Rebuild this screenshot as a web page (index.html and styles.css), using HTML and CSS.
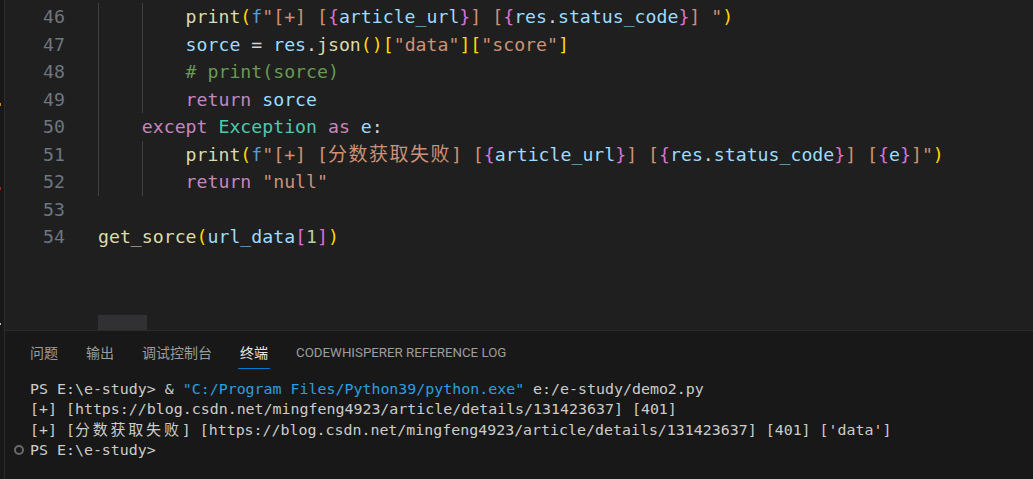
FILE: index.html
```html
<!DOCTYPE html>
<html lang="zh-CN">
<head>
    <meta charset="UTF-8">
    <meta name="viewport" content="width=device-width, initial-scale=1.0">
    <title>demo2.py</title>
    <link rel="stylesheet" href="styles.css">
</head>
<body>
    <div class="window">
        <div class="rail">
            <i class="mark mark-warn"></i>
            <i class="mark mark-err"></i>
            <i class="mark mark-dot"></i>
        </div>
        <div class="main">
            <div class="editor">
                <div class="lines">
                    <div class="line"><span class="ln">46</span><span class="code"><span class="ind"></span><span class="ind"></span><span class="fn">print</span><span class="b1">(</span><span class="sp">f</span><span class="str">"[+] [</span><span class="b2">{</span><span class="var">article_url</span><span class="b2">}</span><span class="str">] [</span><span class="b2">{</span><span class="var">res</span><span class="op">.</span><span class="var">status_code</span><span class="b2">}</span><span class="str">] "</span><span class="b1">)</span></span></div>
                    <div class="line"><span class="ln">47</span><span class="code"><span class="ind"></span><span class="ind"></span><span class="var">sorce</span><span class="op"> = </span><span class="var">res</span><span class="op">.</span><span class="fn">json</span><span class="b1">()[</span><span class="str">"data"</span><span class="b1">][</span><span class="str">"score"</span><span class="b1">]</span></span></div>
                    <div class="line"><span class="ln">48</span><span class="code"><span class="ind"></span><span class="ind"></span><span class="cm"># print(sorce)</span></span></div>
                    <div class="line"><span class="ln">49</span><span class="code"><span class="ind"></span><span class="ind"></span><span class="kw">return</span> <span class="var">sorce</span></span></div>
                    <div class="line"><span class="ln">50</span><span class="code"><span class="ind"></span><span class="kw">except</span> <span class="cls">Exception</span> <span class="kw">as</span> <span class="var">e</span><span class="op">:</span></span></div>
                    <div class="line"><span class="ln">51</span><span class="code"><span class="ind"></span><span class="ind"></span><span class="fn">print</span><span class="b1">(</span><span class="sp">f</span><span class="str">"[+] [<span class="cjk">分数获取失败</span>] [</span><span class="b2">{</span><span class="var">article_url</span><span class="b2">}</span><span class="str">] [</span><span class="b2">{</span><span class="var">res</span><span class="op">.</span><span class="var">status_code</span><span class="b2">}</span><span class="str">] [</span><span class="b2">{</span><span class="var">e</span><span class="b2">}</span><span class="str">]"</span><span class="b1">)</span></span></div>
                    <div class="line"><span class="ln">52</span><span class="code"><span class="ind"></span><span class="ind"></span><span class="kw">return</span> <span class="str">"null"</span></span></div>
                    <div class="line"><span class="ln">53</span><span class="code"></span></div>
                    <div class="line"><span class="ln">54</span><span class="code"><span class="fn">get_sorce</span><span class="b1">(</span><span class="var">url_data</span><span class="b2">[</span><span class="num">1</span><span class="b2">]</span><span class="b1">)</span></span></div>
                </div>
                <div class="hscroll"><div class="thumb"></div></div>
            </div>
            <div class="panel">
                <div class="tabs">
                    <div class="tab">问题</div>
                    <div class="tab">输出</div>
                    <div class="tab">调试控制台</div>
                    <div class="tab active">终端</div>
                    <div class="tab latin">CODEWHISPERER REFERENCE LOG</div>
                </div>
                <div class="terminal">
                    <div class="tline"><span class="deco"></span><span class="out">PS E:\e-study&gt; &amp; <span class="path">"C:/Program Files/Python39/python.exe"</span> e:/e-study/demo2.py</span></div>
                    <div class="tline"><span class="deco"></span><span class="out">[+] [https://blog.csdn.net/mingfeng4923/article/details/131423637] [401]</span></div>
                    <div class="tline"><span class="deco"></span><span class="out">[+] [<span class="tcjk">分数获取失败</span>] [https://blog.csdn.net/mingfeng4923/article/details/131423637] [401] ['data']</span></div>
                    <div class="tline"><span class="deco"><i class="ring"></i></span><span class="out">PS E:\e-study&gt;</span></div>
                </div>
            </div>
        </div>
    </div>
</body>
</html>
```

FILE: styles.css
```css
* {
    margin: 0;
    padding: 0;
    box-sizing: border-box;
}

html, body {
    height: 100%;
    overflow: hidden;
}

body {
    background-color: #181818;
    font-family: "DejaVu Sans Mono", "Noto Sans CJK SC", monospace;
}

.window {
    display: flex;
    height: 100vh;
    width: 100vw;
}

/* left strip with the overview marks */
.rail {
    display: flex;
    flex-flow: column;
    width: 5px;
    padding-top: 103px;
    background-color: #181818;
    border-right: 1px solid #2b2b2b;
}

.mark {
    display: block;
    width: 1px;
    height: 3px;
}

.mark-warn {
    background-color: #d18616;
}

.mark-err {
    margin-top: 81px;
    background-color: #a1260d;
}

.mark-dot {
    margin-top: 133px;
    height: 2px;
    background-color: #b8b8b8;
}

.main {
    display: flex;
    flex-flow: column;
    flex: 1;
}

/* editor */
.editor {
    display: flex;
    flex-flow: column;
    height: 330px;
    padding-top: 3px;
    background-color: #1f1f1f;
    font-size: 18.2px;
}

.lines {
    flex: 1;
}

.line {
    display: flex;
    height: 27.5px;
    line-height: 27.5px;
    white-space: pre;
}

.ln {
    width: 60px;
    text-align: right;
    color: #6e7681;
}

.code {
    margin-left: 33px;
    color: #d4d4d4;
}

.ind {
    display: inline-block;
    width: 4ch;
    height: 27.5px;
    vertical-align: top;
    box-shadow: inset 1px 0 #404040;
}

.cjk {
    font-family: "Noto Sans CJK SC", sans-serif;
    font-size: 19px;
    line-height: 10px;
    letter-spacing: 1.5px;
}

.fn { color: #dcdcaa; }
.var { color: #9cdcfe; }
.str { color: #ce9178; }
.kw { color: #c586c0; }
.sp { color: #569cd6; }
.cls { color: #4ec9b0; }
.cm { color: #6a9955; }
.num { color: #b5cea8; }
.op { color: #d4d4d4; }
.b1 { color: #ffd700; }
.b2 { color: #da70d6; }

.hscroll {
    height: 15px;
    padding-left: 93px;
}

.thumb {
    width: 49px;
    height: 15px;
    background-color: #313133;
}

/* bottom panel */
.panel {
    flex: 1;
    background-color: #181818;
    border-top: 1px solid #2b2b2b;
}

.tabs {
    display: flex;
    gap: 24px;
    padding: 12px 0 0 23px;
    font-family: Roboto, "Noto Sans CJK SC", sans-serif;
    font-size: 14px;
}

.tab {
    padding: 0 2px 5px;
    line-height: 20px;
    color: #9d9d9d;
    border-bottom: 1px solid transparent;
}

.tab.active {
    color: #e7e7e7;
    border-bottom-color: #0078d4;
}

.tab.latin {
    font-size: 13.3px;
}

.terminal {
    padding: 10px 0 0 8px;
    font-size: 14.93px;
    color: #cccccc;
}

.tline {
    display: flex;
    align-items: center;
    height: 20.33px;
    white-space: pre;
}

.deco {
    display: flex;
    align-items: center;
    justify-content: center;
    width: 12px;
    margin-right: 5px;
}

.ring {
    display: block;
    width: 10px;
    height: 10px;
    border: 2px solid #6b6b6b;
    border-radius: 50%;
}

.path {
    color: #2b9fe0;
}

.tcjk {
    font-family: "Noto Sans CJK SC", sans-serif;
    font-size: 15px;
    line-height: 10px;
    letter-spacing: 2.8px;
}
```
